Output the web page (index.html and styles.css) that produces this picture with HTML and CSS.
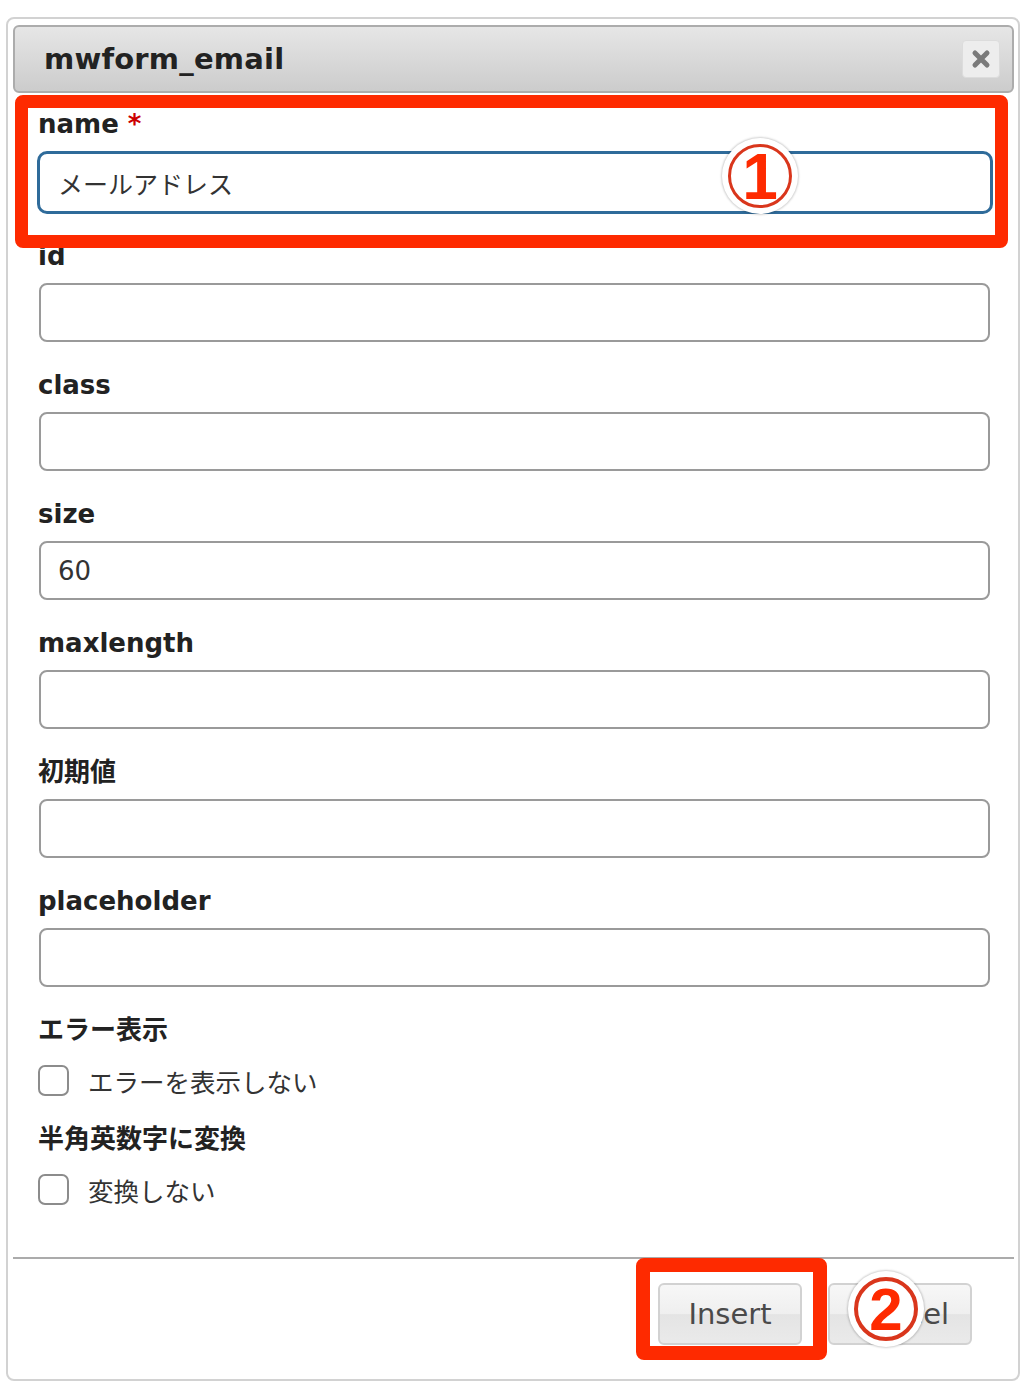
FILE: index.html
```html
<!DOCTYPE html>
<html lang="ja">
<head>
<meta charset="utf-8">
<title>mwform_email</title>
<link rel="stylesheet" href="styles.css">
</head>
<body>
<div class="dialog">
  <div class="titlebar">
    <span class="title">mwform_email</span>
    <span class="close"><svg width="20" height="20" viewBox="0 0 20 20"><path d="M4 4 L16 16 M16 4 L4 16" stroke="#7a7a7a" stroke-width="5" stroke-linecap="round"/></svg></span>
  </div>
  <div class="content">
    <div class="field">
      <div class="label">name <span class="req">*</span></div>
      <input class="input focused" type="text" value="メールアドレス">
    </div>
    <div class="field">
      <div class="label">id</div>
      <input class="input" type="text" value="">
    </div>
    <div class="field">
      <div class="label">class</div>
      <input class="input" type="text" value="">
    </div>
    <div class="field">
      <div class="label">size</div>
      <input class="input" type="text" value="60">
    </div>
    <div class="field">
      <div class="label">maxlength</div>
      <input class="input" type="text" value="">
    </div>
    <div class="field">
      <div class="label">初期値</div>
      <input class="input" type="text" value="">
    </div>
    <div class="field">
      <div class="label">placeholder</div>
      <input class="input" type="text" value="">
    </div>
    <div class="group">
      <div class="label gl">エラー表示</div>
      <div class="check"><span class="box"></span><span class="ctext">エラーを表示しない</span></div>
    </div>
    <div class="group">
      <div class="label gl">半角英数字に変換</div>
      <div class="check"><span class="box"></span><span class="ctext">変換しない</span></div>
    </div>
  </div>
  <div class="pane">
    <span class="btn">Insert</span>
    <span class="btn">Cancel</span>
  </div>
</div>
<div class="hl hl1"></div>
<div class="hl hl2"></div>
<div class="marker m1"><span class="ring"><span class="num n1">1</span></span></div>
<div class="marker m2"><span class="ring ring2"><span class="num n2">2</span></span></div>
</body>
</html>
```
FILE: styles.css
```css
html, body {
  margin: 0;
  padding: 0;
  background: #ffffff;
}
body {
  font-family: "DejaVu Sans", "Noto Sans CJK JP", sans-serif;
  color: #222;
  position: relative;
  width: 1028px;
  height: 1400px;
  overflow: hidden;
}
.dialog {
  box-sizing: border-box;
  margin: 17px 0 0 6px;
  width: 1014px;
  height: 1364px;
  border: 2px solid #d2d2d2;
  border-radius: 8px;
  background: #fff;
  display: flex;
  flex-direction: column;
}
.titlebar {
  box-sizing: border-box;
  margin: 6px 4px 0 5px;
  height: 68px;
  border: 2px solid #acacac;
  border-radius: 6px;
  background: linear-gradient(#e6e6e6, #cccccc);
  display: flex;
  align-items: center;
  justify-content: space-between;
  padding: 0 12px 0 29px;
}
.title {
  font-weight: bold;
  font-size: 29px;
  color: #222;
  letter-spacing: 0.2px;
}
.close {
  box-sizing: border-box;
  width: 38px;
  height: 38px;
  border: 1px solid #dcdcdc;
  border-radius: 4px;
  background: #ededed;
  display: flex;
  align-items: center;
  justify-content: center;
}
.content {
  flex: 1;
  padding: 16px 28px 0 30px;
}
.field {
  margin-bottom: 28px;
}
.label {
  font-weight: bold;
  font-size: 26px;
  line-height: 30px;
  height: 30px;
  margin-bottom: 12px;
  color: #222;
}
.req {
  color: #c00;
}
.input {
  display: block;
  box-sizing: border-box;
  margin: 0 0 0 1px;
  width: 951px;
  height: 59px;
  border: 2px solid #9a9a9a;
  border-radius: 8px;
  padding: 0 17px;
  font-family: "DejaVu Sans", "Noto Sans CJK JP", sans-serif;
  font-size: 26px;
  color: #333;
  background: #fff;
  outline: none;
}
.input.focused {
  margin-left: -1px;
  width: 956px;
  height: 63px;
  border: 3px solid #2f6b9a;
  border-radius: 10px;
  padding-left: 18px;
  font-size: 25px;
}
.field:first-child {
  margin-bottom: 27px;
}
.group {
  margin-bottom: 28px;
}
.label.gl {
  margin-bottom: 20px;
}
.check {
  display: flex;
  align-items: center;
  height: 31px;
}
.box {
  box-sizing: border-box;
  width: 31px;
  height: 31px;
  border: 2px solid #8c8c8c;
  border-radius: 7px;
  background: #fff;
  margin-right: 19px;
}
.ctext {
  font-size: 25.5px;
  color: #333;
}
.pane {
  box-sizing: border-box;
  height: 122px;
  margin: 0 4px 0 5px;
  border-top: 2px solid #ababab;
  display: flex;
  justify-content: flex-end;
  align-items: flex-start;
  gap: 26px;
  padding: 24px 42px 0 0;
}
.btn {
  box-sizing: border-box;
  width: 144px;
  height: 62px;
  border: 2px solid #d2d2d2;
  border-radius: 6px;
  background: linear-gradient(#f7f7f7, #efefef 50%, #e4e4e4 51%, #eaeaea);
  display: flex;
  align-items: center;
  justify-content: center;
  font-size: 29px;
  color: #4a4a4a;
}
.hl {
  position: absolute;
  box-sizing: border-box;
  border-style: solid;
  border-color: #fe2a00;
  border-radius: 8px;
}
.hl1 {
  left: 15px;
  top: 95px;
  width: 993px;
  height: 153px;
  border-width: 13px;
}
.hl2 {
  left: 636px;
  top: 1258px;
  width: 191px;
  height: 102px;
  border-width: 14px;
}
.marker {
  position: absolute;
  width: 76px;
  height: 76px;
  border-radius: 50%;
  background: #fff;
  box-shadow: 0 0 2px 1px rgba(0, 0, 0, 0.18);
  display: flex;
  align-items: center;
  justify-content: center;
}
.m1 {
  left: 722px;
  top: 138px;
}
.m2 {
  left: 848px;
  top: 1271px;
}
.ring {
  box-sizing: border-box;
  width: 64px;
  height: 64px;
  border: 3px solid #d9361c;
  border-radius: 50%;
  display: flex;
  align-items: center;
  justify-content: center;
}
.ring2 {
  border-width: 4px;
}
.num {
  font-family: "Liberation Sans", Arial, sans-serif;
  font-weight: bold;
  color: #fe2a00;
  line-height: 1;
}
.n1 {
  font-size: 64px;
  margin-top: 2px;
}
.n2 {
  font-size: 60px;
  margin-top: 2px;
}
```
